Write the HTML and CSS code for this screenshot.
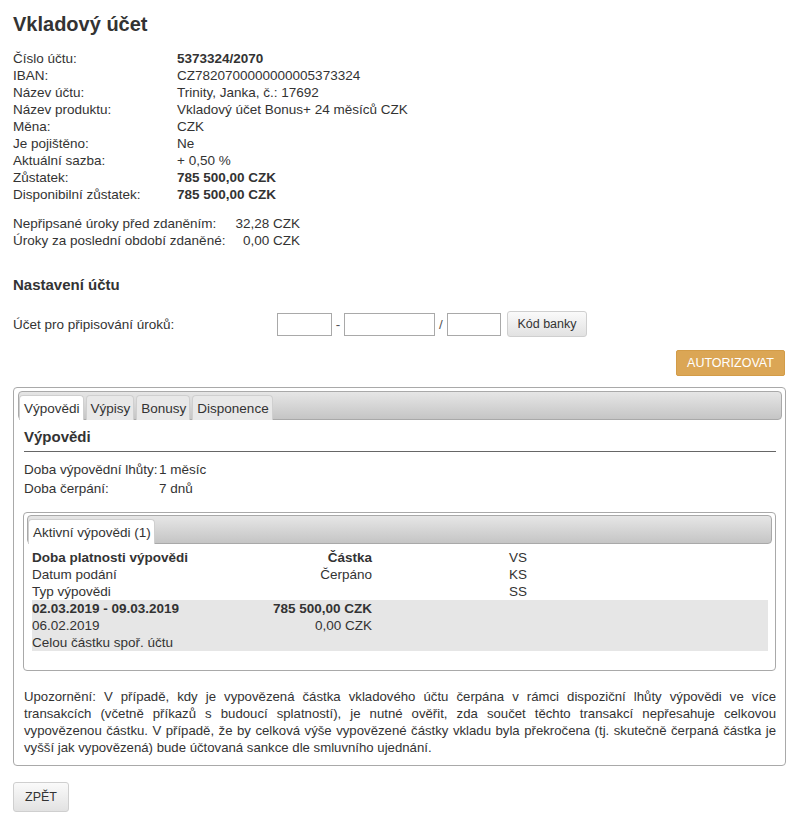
FILE: index.html
```html
<!DOCTYPE html>
<html lang="cs">
<head>
<meta charset="utf-8">
<title>Vkladový účet</title>
<link rel="stylesheet" href="styles.css">
</head>
<body>
<div class="page">
  <h1 class="title">Vkladový účet</h1>

  <div class="info">
    <div class="lbl">Číslo účtu:</div><div class="val b">5373324/2070</div>
    <div class="lbl">IBAN:</div><div class="val">CZ7820700000000005373324</div>
    <div class="lbl">Název účtu:</div><div class="val">Trinity, Janka, č.: 17692</div>
    <div class="lbl">Název produktu:</div><div class="val">Vkladový účet Bonus+ 24 měsíců CZK</div>
    <div class="lbl">Měna:</div><div class="val">CZK</div>
    <div class="lbl">Je pojištěno:</div><div class="val">Ne</div>
    <div class="lbl">Aktuální sazba:</div><div class="val">+ 0,50 %</div>
    <div class="lbl">Zůstatek:</div><div class="val b">785 500,00 CZK</div>
    <div class="lbl">Disponibilní zůstatek:</div><div class="val b">785 500,00 CZK</div>
  </div>

  <div class="interest">
    <div>Nepřipsané úroky před zdaněním:</div><div class="num">32,28 CZK</div>
    <div>Úroky za poslední období zdaněné:</div><div class="num">0,00 CZK</div>
  </div>

  <h2 class="section">Nastavení účtu</h2>

  <div class="acctrow">
    <div class="acctlabel">Účet pro připisování úroků:</div>
    <div class="acctinputs">
      <input class="inp w55" type="text">
      <span class="sep">-</span>
      <input class="inp w91" type="text">
      <span class="sep">/</span>
      <input class="inp w54" type="text">
      <button class="btn btn-light bank">Kód banky</button>
    </div>
  </div>

  <div class="authrow">
    <button class="btn btn-gold">AUTORIZOVAT</button>
  </div>

  <div class="box">
    <div class="tabbar">
      <div class="tab active">Výpovědi</div>
      <div class="tab">Výpisy</div>
      <div class="tab">Bonusy</div>
      <div class="tab">Disponence</div>
    </div>
    <div class="boxcontent">
      <h3 class="subhead">Výpovědi</h3>
      <div class="terms">
        <div>Doba výpovědní lhůty:</div><div>1 měsíc</div>
        <div>Doba čerpání:</div><div>7 dnů</div>
      </div>

      <div class="innerbox">
        <div class="tabbar">
          <div class="tab active">Aktivní výpovědi (1)</div>
        </div>
        <table class="notices">
          <colgroup><col class="c1"><col class="c2"><col class="c3"><col></colgroup>
          <tbody class="head">
            <tr><td class="b">Doba platnosti výpovědi</td><td class="r b">Částka</td><td></td><td>VS</td></tr>
            <tr><td>Datum podání</td><td class="r">Čerpáno</td><td></td><td>KS</td></tr>
            <tr><td>Typ výpovědi</td><td></td><td></td><td>SS</td></tr>
          </tbody>
          <tbody class="gray">
            <tr><td class="b">02.03.2019 - 09.03.2019</td><td class="r b">785 500,00 CZK</td><td></td><td></td></tr>
            <tr><td>06.02.2019</td><td class="r">0,00 CZK</td><td></td><td></td></tr>
            <tr><td>Celou částku spoř. účtu</td><td></td><td></td><td></td></tr>
          </tbody>
        </table>
      </div>

      <p class="warning">Upozornění: V případě, kdy je vypovězená částka vkladového účtu čerpána v rámci dispoziční lhůty výpovědi ve více transakcích (včetně příkazů s budoucí splatností), je nutné ověřit, zda součet těchto transakcí nepřesahuje celkovou vypovězenou částku. V případě, že by celková výše vypovězené částky vkladu byla překročena (tj. skutečně čerpaná částka je vyšší jak vypovězená) bude účtovaná sankce dle smluvního ujednání.</p>
    </div>
  </div>

  <div class="backrow">
    <button class="btn btn-light back">ZPĚT</button>
  </div>
</div>
</body>
</html>
```

FILE: styles.css
```css
* { box-sizing: border-box; }
html, body { margin: 0; padding: 0; background: #fff; }
body {
  font-family: "Liberation Sans", Arial, sans-serif;
  font-size: 13.5px;
  line-height: 17px;
  color: #333;
}
.page { padding: 12px 14px 10px 13px; }

.title {
  margin: 0;
  font-size: 20px;
  line-height: 24px;
  font-weight: bold;
  color: #333;
}

.info {
  margin-top: 14px;
  display: grid;
  grid-template-columns: 164px auto;
}
.b { font-weight: bold; }

.interest {
  margin-top: 12px;
  display: grid;
  grid-template-columns: max-content max-content;
  column-gap: 10px;
}
.interest .num { text-align: right; }

.section {
  margin: 26px 0 0;
  font-size: 15px;
  line-height: 20px;
  font-weight: bold;
}

.acctrow {
  margin-top: 16px;
  display: flex;
  align-items: center;
}
.acctlabel { width: 264px; }
.acctinputs {
  display: flex;
  align-items: center;
}
.inp {
  height: 23px;
  border: 1px solid #a9a9a9;
  background: #fff;
  padding: 0 3px;
  margin: 0;
  font: inherit;
}
.w55 { width: 55px; }
.w91 { width: 91px; }
.w54 { width: 54px; }
.sep { width: 12px; text-align: center; color: #555; }

.btn {
  font-family: "Liberation Sans", Arial, sans-serif;
  font-size: 12.5px;
  margin: 0;
  cursor: pointer;
}
.btn-light {
  background: linear-gradient(#fafafa, #e2e2e2);
  border: 1px solid #cfcfcf;
  border-radius: 3px;
  color: #333;
}
.bank {
  margin-left: 6px;
  height: 26px;
  width: 80px;
  padding: 0;
}
.authrow {
  margin-top: 13px;
  display: flex;
  justify-content: flex-end;
  padding-right: 1px;
}
.btn-gold {
  background: #dba655;
  border: 1px solid #d39c48;
  border-radius: 2px;
  color: #fff;
  height: 26px;
  width: 109px;
  padding: 0;
}

.box {
  margin-top: 11px;
  border: 1px solid #a9a9a9;
  border-radius: 4px;
  padding: 3px 3px 9px 4px;
}
.tabbar {
  display: flex;
  align-items: flex-end;
  gap: 2px;
  height: 29px;
  border: 1px solid #a9a9a9;
  border-radius: 4px;
  background: linear-gradient(#e6e6e6, #c5c5c5);
  padding: 2px 0 0 0;
}
.tab {
  height: 25px;
  margin-bottom: -1px;
  border: 1px solid #cfcfcf;
  border-bottom: 0;
  border-radius: 4px 4px 0 0;
  background: #e8e8e8;
  padding: 0 3px 0 4px;
  line-height: 25px;
  color: #333;
}
.tab.active { background: #fff; }

.boxcontent { padding: 7px 6px 0 6px; }
.subhead {
  margin: 0;
  font-size: 15px;
  line-height: 20px;
  font-weight: bold;
  padding-bottom: 4px;
  border-bottom: 1px solid #666;
}
.terms {
  margin-top: 9px;
  display: grid;
  grid-template-columns: 135px auto;
  row-gap: 2px;
}

.innerbox {
  margin-top: 15px;
  margin-left: -1px;
  border: 1px solid #a9a9a9;
  border-radius: 4px;
  padding: 2px 3px 19px 3px;
}
.notices {
  margin: 5px 0 0 5px;
  width: 736px;
  border-collapse: collapse;
  table-layout: fixed;
}
.notices td {
  padding: 0;
  height: 17px;
  line-height: 17px;
  white-space: nowrap;
}
.notices .c1 { width: 200px; }
.notices .c2 { width: 140px; }
.notices .c3 { width: 137px; }
.notices .r { text-align: right; }
.notices .gray td { background: #e6e6e6; }

.warning {
  margin: 17px 0 0;
  font-size: 13.2px;
  text-align: justify;
}

.backrow { margin-top: 16px; }
.back {
  height: 30px;
  width: 56px;
  padding: 0;
}
```
